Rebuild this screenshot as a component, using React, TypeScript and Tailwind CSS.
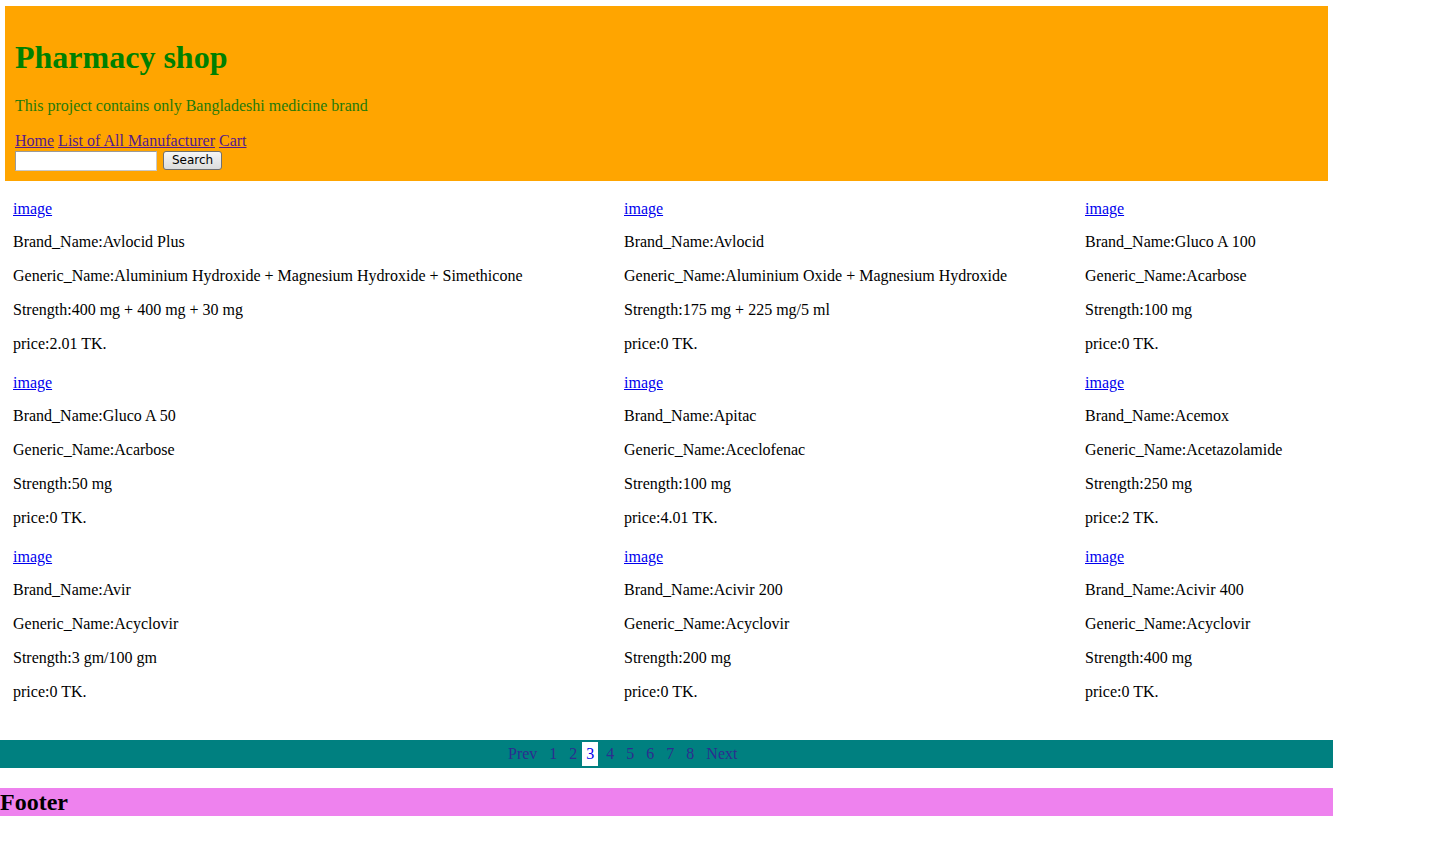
import React from "react";

interface Medicine {
  brand: string;
  generic: string;
  strength: string;
  price: string;
}

const medicines: Medicine[] = [
  { brand: "Avlocid Plus", generic: "Aluminium Hydroxide + Magnesium Hydroxide + Simethicone", strength: "400 mg + 400 mg + 30 mg", price: "2.01" },
  { brand: "Avlocid", generic: "Aluminium Oxide + Magnesium Hydroxide", strength: "175 mg + 225 mg/5 ml", price: "0" },
  { brand: "Gluco A 100", generic: "Acarbose", strength: "100 mg", price: "0" },
  { brand: "Gluco A 50", generic: "Acarbose", strength: "50 mg", price: "0" },
  { brand: "Apitac", generic: "Aceclofenac", strength: "100 mg", price: "4.01" },
  { brand: "Acemox", generic: "Acetazolamide", strength: "250 mg", price: "2" },
  { brand: "Avir", generic: "Acyclovir", strength: "3 gm/100 gm", price: "0" },
  { brand: "Acivir 200", generic: "Acyclovir", strength: "200 mg", price: "0" },
  { brand: "Acivir 400", generic: "Acyclovir", strength: "400 mg", price: "0" },
];

const pages = ["1", "2", "3", "4", "5", "6", "7", "8"];

function MedicineCard({ item }: { item: Medicine }) {
  return (
    <div className="flex flex-col gap-[16px] leading-[18px]">
      <a href="#" className="text-[#0000ee] underline w-fit mb-[-1px]">image</a>
      <p>Brand_Name:{item.brand}</p>
      <p>Generic_Name:{item.generic}</p>
      <p>Strength:{item.strength}</p>
      <p>price:{item.price} TK.</p>
    </div>
  );
}

export default function App() {
  return (
    <div className="min-h-[860px] bg-white text-black text-[16px] font-['Liberation_Serif',serif]">
      {/* Header */}
      <div className="ml-[5px] mt-[6px] w-[1323px] h-[175px] bg-[#ffa500] pl-[10px] pt-[33px]">
        <h1 className="text-[32px] leading-[37px] font-bold text-[#008000]">Pharmacy shop</h1>
        <p className="mt-[21px] leading-[18px] text-[#1f7a0a]">This project contains only Bangladeshi medicine brand</p>
        <div className="mt-[17px] leading-[18px] text-[#551a8b]">
          <a href="#" className="underline">Home</a>{" "}
          <a href="#" className="underline">List of All Manufacturer</a>{" "}
          <a href="#" className="underline">Cart</a>
        </div>
        <div className="mt-[1px] flex items-start gap-[6px]">
          <input
            type="text"
            className="w-[142px] h-[20px] bg-white border border-[#c8c8c8] border-t-[#9a9a9a] border-l-[#9a9a9a] outline-none"
          />
          <button className="w-[59px] h-[19px] rounded-[3px] border border-[#707070] bg-gradient-to-b from-[#f6f6f6] to-[#dcdcdc] text-[12px] leading-[17px] font-['DejaVu_Sans',sans-serif] text-black">
            Search
          </button>
        </div>
      </div>

      {/* Product grid */}
      <div className="pl-[13px] pt-[19px] grid grid-cols-[611px_461px_auto] gap-y-[21px]">
        {medicines.map((m) => (
          <MedicineCard key={m.brand} item={m} />
        ))}
      </div>

      {/* Pagination */}
      <div className="mt-[39px] w-[1333px] h-[28px] bg-[#008080] pl-[504px] flex items-center leading-[18px] text-[#2d2d8f]">
        <a href="#" className="px-[4px]">Prev</a>
        {pages.map((p) => (
          <a
            key={p}
            href="#"
            className={p === "3" ? "ml-[1px] px-[4px] py-[3px] bg-white text-[#0000ee]" : "ml-[4px] px-[4px]"}
          >
            {p}
          </a>
        ))}
        <a href="#" className="ml-[4px] px-[4px]">Next</a>
      </div>

      {/* Footer */}
      <div className="mt-[20px] w-[1333px] h-[28px] bg-[#ee82ee] flex items-center">
        <h2 className="text-[24px] leading-[28px] font-bold">Footer</h2>
      </div>
    </div>
  );
}
